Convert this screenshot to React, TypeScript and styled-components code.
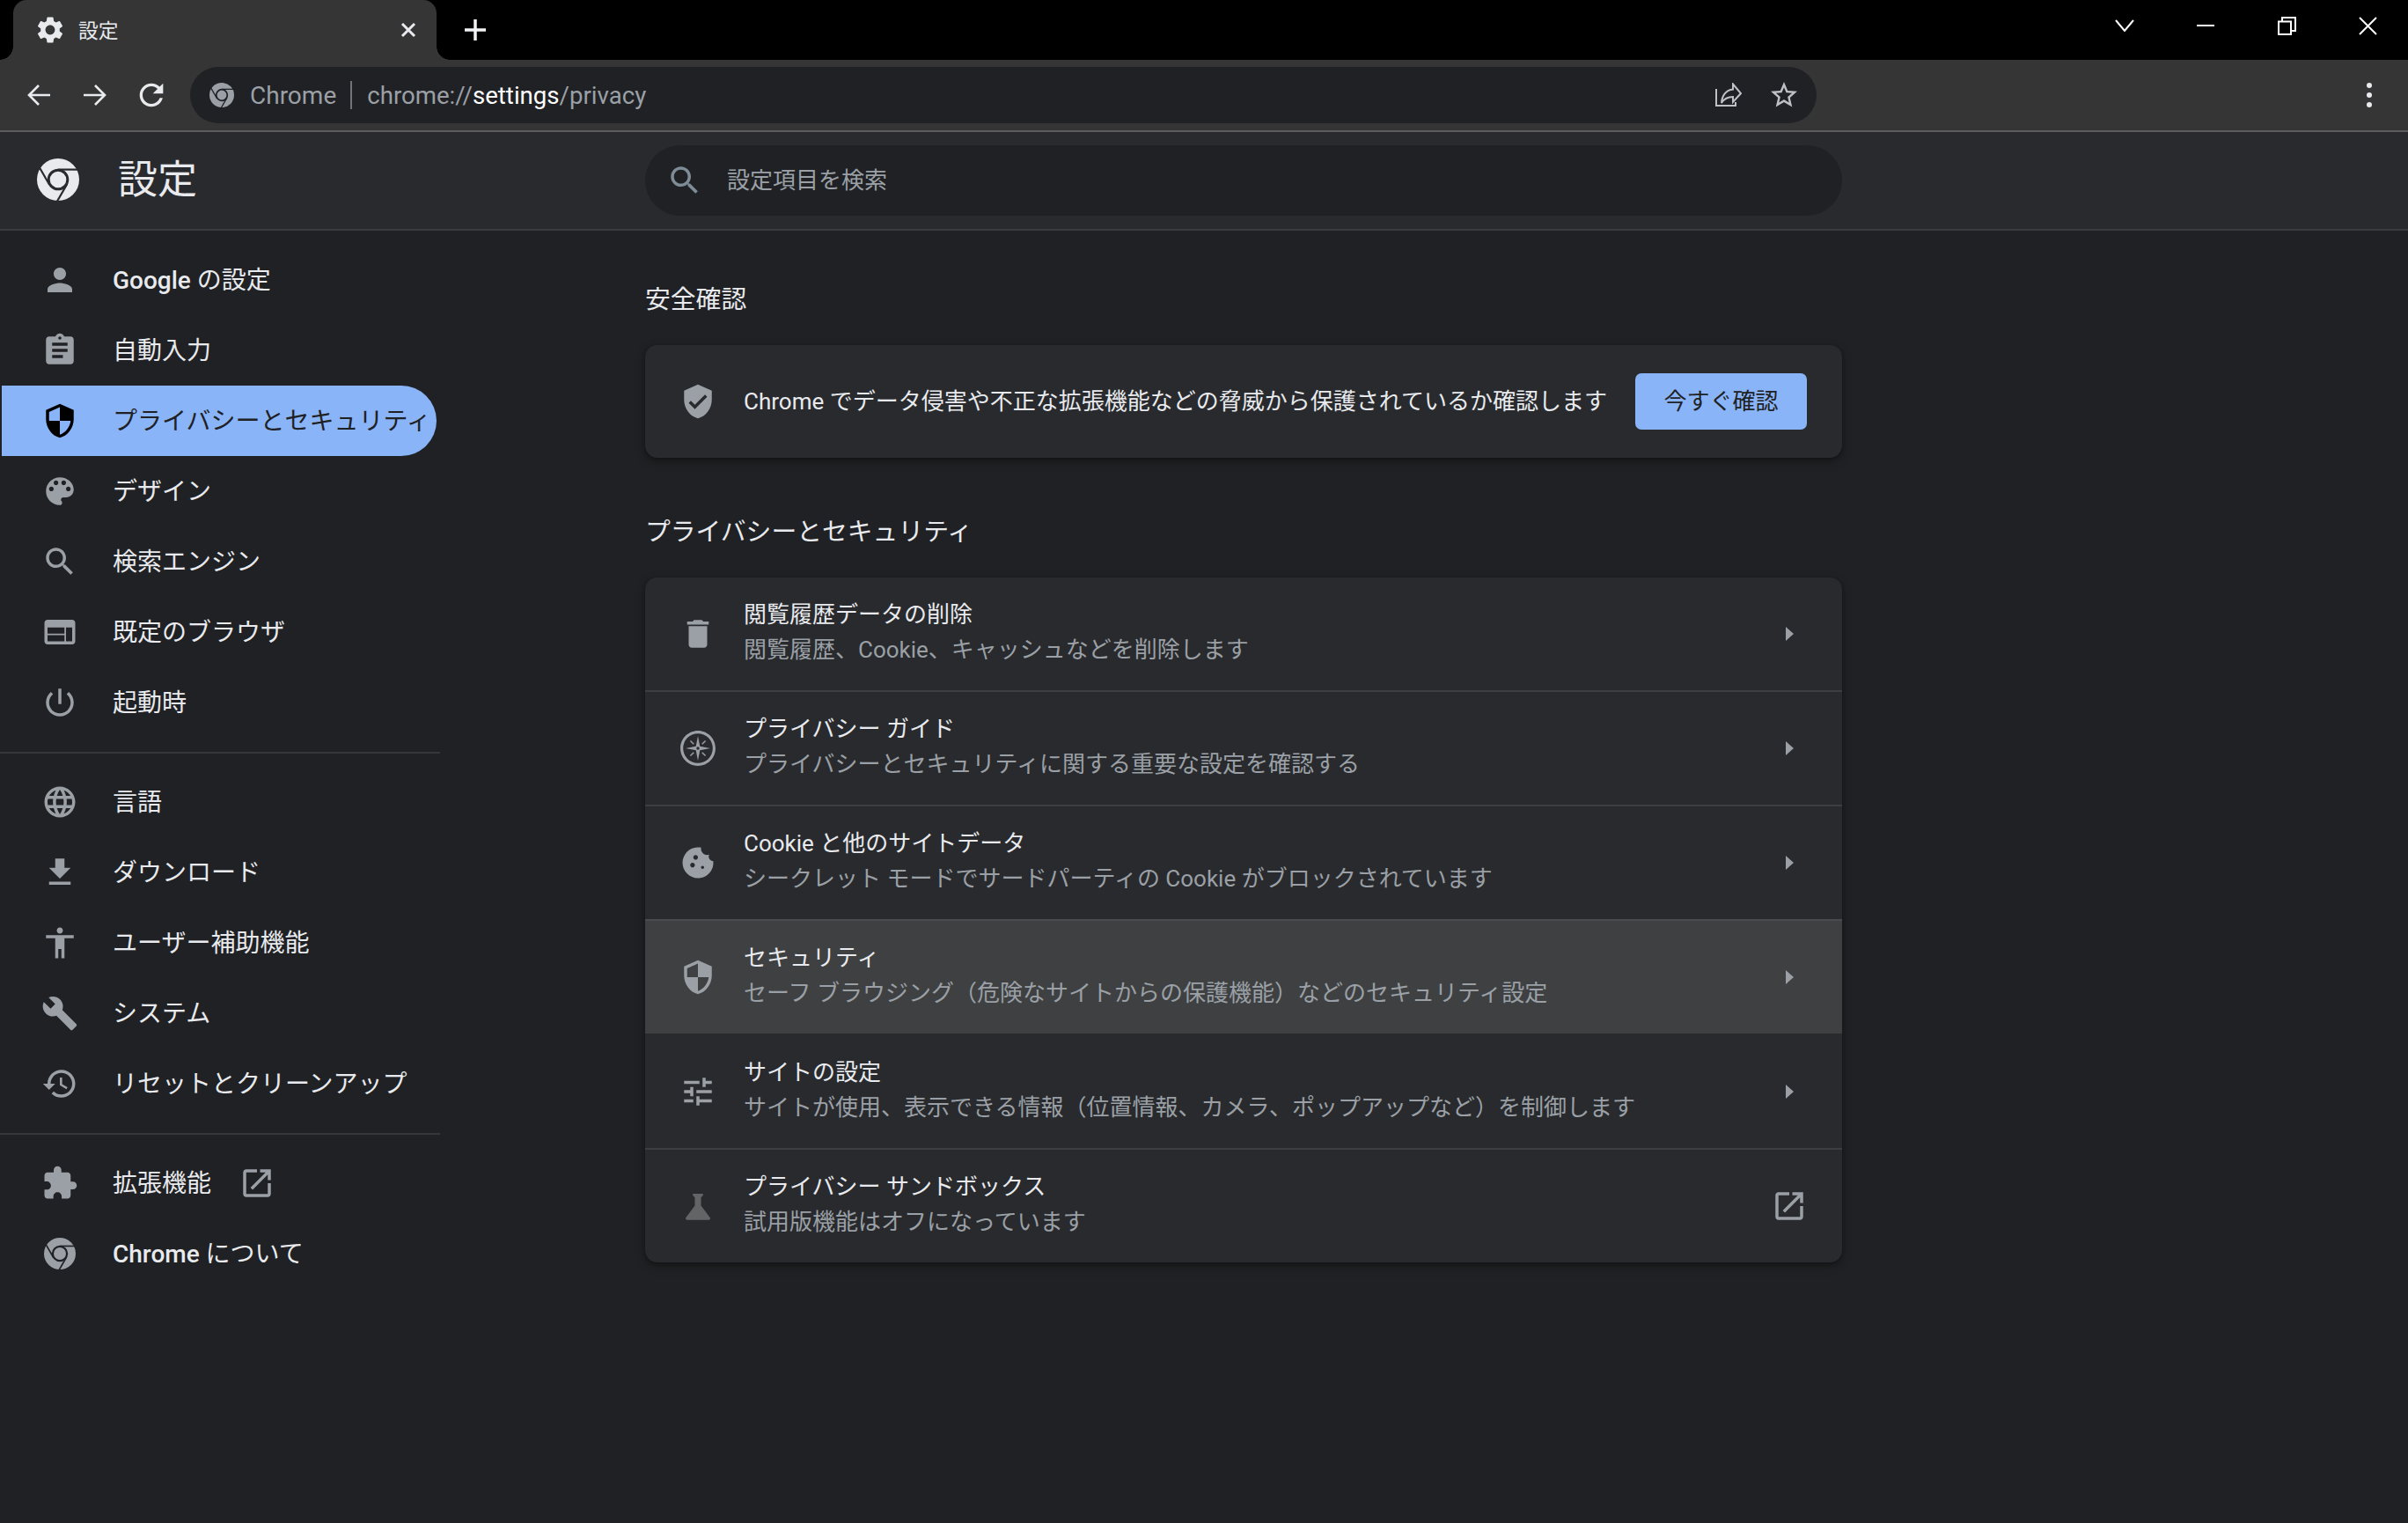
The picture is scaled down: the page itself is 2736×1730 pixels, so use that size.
import React from "react";
import styled, { createGlobalStyle } from "styled-components";

const GlobalStyle = createGlobalStyle`
  html, body { margin: 0; padding: 0; background: #202124; }
  body { font-family: Roboto, "Noto Sans CJK JP", sans-serif; color: #e8eaed; overflow: hidden; }
  * { box-sizing: border-box; }
`;

const Page = styled.div`
  width: 2736px;
  height: 1730px;
  display: flex;
  flex-direction: column;
  background: #202124;
`;

/* ---------- window frame ---------- */
const TabStrip = styled.div`
  height: 68px;
  background: #000;
  display: flex;
  align-items: stretch;
  padding-left: 15px;
`;
const Tab = styled.div`
  position: relative;
  width: 481px;
  background: #353535;
  border-radius: 15px 15px 0 0;
  display: flex;
  align-items: center;
  padding-left: 24px;
  color: #e8eaed;
  font-size: 22.75px;
  &::before, &::after {
    content: "";
    position: absolute;
    bottom: 0;
    width: 15px;
    height: 15px;
  }
  &::before { left: -15px; background: radial-gradient(circle at 0 0, transparent 14.5px, #353535 15px); }
  &::after { right: -15px; background: radial-gradient(circle at 100% 0, transparent 14.5px, #353535 15px); }
`;
const TabTitle = styled.span`
  margin-left: 14px;
  padding-bottom: 2px;
  flex: 1;
`;
const TabClose = styled.span`
  width: 18px;
  height: 18px;
  margin-right: 23px;
  display: flex;
`;
const NewTab = styled.span`
  width: 26px;
  height: 26px;
  margin: 21px 0 0 31px;
  display: flex;
`;
const WindowControls = styled.div`
  margin-left: auto;
  display: grid;
  grid-template-columns: repeat(4, 92px);
`;
const WindowButton = styled.span`
  display: flex;
  align-items: center;
  justify-content: center;
  height: 58px;
`;

const Toolbar = styled.div`
  height: 82px;
  background: #353535;
  border-bottom: 2px solid #5c5c5c;
  display: flex;
  align-items: center;
  padding: 0 12px 0 12px;
`;
const ToolButton = styled.span`
  width: 64px;
  height: 64px;
  display: flex;
  align-items: center;
  justify-content: center;
`;
const Omnibox = styled.div`
  width: 1848px;
  height: 64px;
  margin-left: 12px;
  border-radius: 32px;
  background: #202124;
  display: flex;
  align-items: center;
  padding: 0 19px 0 22px;
  font-size: 28px;
`;
const OmniOrigin = styled.span`
  margin-left: 18px;
  color: #9aa0a6;
`;
const OmniDivider = styled.span`
  width: 2px;
  height: 32px;
  margin: 0 17px 0 16px;
  background: #70747a;
`;
const OmniUrl = styled.span`
  font-size: 27.6px;
`;
const UrlDim = styled.span`
  color: #9aa0a6;
`;
const UrlBright = styled.span`
  color: #fff;
`;
const OmniActions = styled.div`
  margin-left: auto;
  display: flex;
  align-items: center;
  gap: 30px;
`;
const MenuDots = styled.div`
  margin-left: auto;
  width: 64px;
  display: flex;
  flex-direction: column;
  align-items: center;
  gap: 5px;
  span { width: 6px; height: 6px; border-radius: 50%; background: #e8eaed; }
`;

/* ---------- settings header ---------- */
const Header = styled.header`
  height: 112px;
  background: #292a2d;
  border-bottom: 2px solid #3b3c3f;
  display: grid;
  grid-template-columns: 733px 1360px;
  align-items: center;
`;
const Brand = styled.div`
  display: flex;
  align-items: center;
  padding: 0 0 2px 42px;
  gap: 44px;
`;
const BrandTitle = styled.h1`
  margin: 0;
  font-size: 45px;
  font-weight: 400;
  color: #e8eaed;
  line-height: 1;
`;
const SearchBox = styled.div`
  height: 80px;
  border-radius: 40px;
  background: #202124;
  display: flex;
  align-items: center;
  padding-left: 24px;
  gap: 27px;
  color: #9aa0a6;
  font-size: 26px;
`;
const SearchHint = styled.span`
  padding-bottom: 5px;
`;

/* ---------- body ---------- */
const Body = styled.div`
  flex: 1;
  display: flex;
`;
const Sidebar = styled.nav`
  width: 500px;
  flex: none;
  padding-top: 16px;
`;
const NavItem = styled.div<{ $active?: boolean }>`
  width: 494px;
  height: 80px;
  margin-left: 2px;
  padding-left: 45px;
  display: flex;
  align-items: center;
  gap: 39px;
  font-size: 28px;
  white-space: nowrap;
  border-radius: 0 40px 40px 0;
  color: ${(p) => (p.$active ? "#202124" : "#e8eaed")};
  background: ${(p) => (p.$active ? "#8ab4f8" : "transparent")};
`;
const NavIconBox = styled.span`
  width: 42px;
  height: 42px;
  flex: none;
  display: flex;
  align-items: center;
  justify-content: center;
`;
const NavLabel = styled.span`
  padding-bottom: 5px;
`;
const NavLinkLabel = styled.span`
  display: flex;
  align-items: center;
  gap: 31px;
`;
const Latin = styled.span`
  font-weight: 500;
`;
const NavRule = styled.hr`
  margin: 16px 0 15px;
  border: 0;
  height: 2px;
  background: #36373a;
`;

const Main = styled.main`
  margin-left: 233px;
  width: 1360px;
  padding-top: 50px;
`;
const SectionTitle = styled.h2<{ $first?: boolean }>`
  margin: ${(p) => (p.$first ? "0 0 24px" : "56px 0 24px")};
  height: 56px;
  line-height: 56px;
  font-size: 28.8px;
  font-weight: 400;
  color: #e8eaed;
  white-space: nowrap;
`;
const Card = styled.section`
  background: #292a2d;
  border-radius: 14px;
  overflow: hidden;
  box-shadow: 0 2px 4px rgba(0, 0, 0, 0.3), 0 4px 10px 3px rgba(0, 0, 0, 0.15);
`;
const SafetyRow = styled.div`
  height: 128px;
  display: flex;
  align-items: center;
  padding: 0 40px 0 39px;
  gap: 31px;
  font-size: 26px;
  color: #e8eaed;
`;
const SafetyText = styled.span`
  white-space: nowrap;
  padding-bottom: 5px;
`;
const CheckButton = styled.button`
  margin-left: auto;
  width: 195px;
  height: 64px;
  border: 0;
  border-radius: 7px;
  background: #8ab4f8;
  color: #202124;
  font: inherit;
  padding: 0 0 5px;
`;
const Row = styled.div<{ $first?: boolean; $hover?: boolean; $noRule?: boolean }>`
  height: ${(p) => (p.$first ? "128px" : "130px")};
  display: flex;
  align-items: center;
  padding: 0 39px;
  gap: 31px;
  background: ${(p) => (p.$hover ? "#3f4042" : "transparent")};
  border-top: ${(p) => (p.$first ? "none" : p.$noRule ? "2px solid transparent" : `2px solid ${p.$hover ? "#4a4b4f" : "#3d3e41"}`)};
`;
const RowText = styled.div`
  flex: 1;
  display: flex;
  flex-direction: column;
  font-size: 26px;
  line-height: 40px;
  padding-bottom: 4px;
`;
const RowLabel = styled.span`
  color: #e8eaed;
`;
const RowSub = styled.span`
  color: #9aa0a6;
`;
const RowTrail = styled.span`
  width: 42px;
  display: flex;
  justify-content: center;
`;

/* ---------- icons ---------- */
const Svg = styled.svg<{ $color?: string }>`
  flex: none;
  display: block;
  fill: ${(p) => p.$color || "#9aa0a6"};
`;
const StrokeSvg = styled.svg<{ $color?: string; $w?: number }>`
  flex: none;
  display: block;
  fill: none;
  stroke: ${(p) => p.$color || "#e8eaed"};
  stroke-width: ${(p) => p.$w || 2};
`;

const P = {
  person: "M12 12c2.21 0 4-1.79 4-4s-1.79-4-4-4-4 1.79-4 4 1.79 4 4 4zm0 2c-2.67 0-8 1.34-8 4v2h16v-2c0-2.66-5.33-4-8-4z",
  assignment: "M19 3h-4.18C14.4 1.84 13.3 1 12 1c-1.3 0-2.4.84-2.82 2H5c-1.1 0-2 .9-2 2v14c0 1.1.9 2 2 2h14c1.1 0 2-.9 2-2V5c0-1.1-.9-2-2-2zm-7 0c.55 0 1 .45 1 1s-.45 1-1 1-1-.45-1-1 .45-1 1-1zm2 14H7v-2h7v2zm3-4H7v-2h10v2zm0-4H7V7h10v2z",
  shield: "M12 1L3 5v6c0 5.55 3.84 10.74 9 12 5.16-1.26 9-6.45 9-12V5l-9-4zm0 10.99h7c-.53 4.12-3.28 7.79-7 8.94V12H5V6.3l7-3.11v8.8z",
  palette: "M12 3c-4.97 0-9 4.03-9 9s4.03 9 9 9c.83 0 1.5-.67 1.5-1.5 0-.39-.15-.74-.39-1.01-.23-.26-.38-.61-.38-.99 0-.83.67-1.5 1.5-1.5H16c2.76 0 5-2.24 5-5 0-4.42-4.03-8-9-8zm-5.5 9c-.83 0-1.5-.67-1.5-1.5S5.67 9 6.5 9 8 9.67 8 10.5 7.33 12 6.5 12zm3-4C8.67 8 8 7.33 8 6.5S8.67 5 9.5 5s1.5.67 1.5 1.5S10.33 8 9.5 8zm5 0c-.83 0-1.5-.67-1.5-1.5S13.67 5 14.5 5s1.5.67 1.5 1.5S15.33 8 14.5 8zm3 4c-.83 0-1.5-.67-1.5-1.5S16.67 9 17.5 9s1.5.67 1.5 1.5-.67 1.5-1.5 1.5z",
  search: "M15.5 14h-.79l-.28-.27C15.41 12.59 16 11.11 16 9.5 16 5.91 13.09 3 9.5 3S3 5.91 3 9.5 5.91 16 9.5 16c1.61 0 3.09-.59 4.23-1.57l.27.28v.79l5 4.99L20.49 19l-4.99-5zm-6 0C7.01 14 5 11.99 5 9.5S7.01 5 9.5 5 14 7.01 14 9.5 11.99 14 9.5 14z",
  web: "M20 4H4c-1.1 0-1.99.9-1.99 2L2 18c0 1.1.9 2 2 2h16c1.1 0 2-.9 2-2V6c0-1.1-.9-2-2-2zm-5 14H4v-4h11v4zm0-5H4V9h11v4zm5 5h-4V9h4v9z",
  power: "M13 3h-2v10h2V3zm4.83 2.17l-1.42 1.42C17.99 7.86 19 9.81 19 12c0 3.87-3.13 7-7 7s-7-3.13-7-7c0-2.19 1.01-4.14 2.58-5.42L6.17 5.17C4.23 6.82 3 9.26 3 12c0 4.97 4.03 9 9 9s9-4.03 9-9c0-2.74-1.23-5.18-3.17-6.83z",
  language: "M11.99 2C6.47 2 2 6.48 2 12s4.47 10 9.99 10C17.52 22 22 17.52 22 12S17.52 2 11.99 2zm6.93 6h-2.95c-.32-1.25-.78-2.45-1.38-3.56 1.84.63 3.37 1.91 4.33 3.56zM12 4.04c.83 1.2 1.48 2.53 1.91 3.96h-3.82c.43-1.43 1.08-2.76 1.91-3.96zM4.26 14C4.1 13.36 4 12.69 4 12s.1-1.36.26-2h3.38c-.08.66-.14 1.32-.14 2 0 .68.06 1.34.14 2H4.26zm.82 2h2.95c.32 1.25.78 2.45 1.38 3.56-1.84-.63-3.37-1.9-4.33-3.56zm2.95-8H5.08c.96-1.66 2.49-2.93 4.33-3.56C8.81 5.55 8.35 6.75 8.03 8zM12 19.96c-.83-1.2-1.48-2.53-1.91-3.96h3.82c-.43 1.43-1.08 2.76-1.91 3.96zM14.34 14H9.66c-.09-.66-.16-1.32-.16-2 0-.68.07-1.35.16-2h4.68c.09.65.16 1.32.16 2 0 .68-.07 1.34-.16 2zm.25 5.56c.6-1.11 1.06-2.31 1.38-3.56h2.95c-.96 1.65-2.49 2.93-4.33 3.56zM16.36 14c.08-.66.14-1.32.14-2 0-.68-.06-1.34-.14-2h3.38c.16.64.26 1.31.26 2s-.1 1.36-.26 2h-3.38z",
  download: "M19 9h-4V3H9v6H5l7 7 7-7zM5 18v2h14v-2H5z",
  accessibility: "M12 2c1.1 0 2 .9 2 2s-.9 2-2 2-2-.9-2-2 .9-2 2-2zm9 7h-6v13h-2v-6h-2v6H9V9H3V7h18v2z",
  build: "M22.7 19l-9.1-9.1c.9-2.3.4-5-1.5-6.9-2-2-5-2.4-7.4-1.3L9 6 6 9 1.6 4.7C.4 7.1.9 10.1 2.9 12.1c1.9 1.9 4.6 2.4 6.9 1.5l9.1 9.1c.4.4 1 .4 1.4 0l2.3-2.3c.5-.4.5-1.1.1-1.4z",
  restore: "M13 3c-4.97 0-9 4.03-9 9H1l3.89 3.89.07.14L9 12H6c0-3.87 3.13-7 7-7s7 3.13 7 7-3.13 7-7 7c-1.93 0-3.68-.79-4.94-2.06l-1.42 1.42C8.27 19.99 10.51 21 13 21c4.97 0 9-4.03 9-9s-4.03-9-9-9zm-1 5v5l4.28 2.54.72-1.21-3.5-2.08V8H12z",
  extension: "M20.5 11H19V7c0-1.1-.9-2-2-2h-4V3.5C13 2.12 11.88 1 10.5 1S8 2.12 8 3.5V5H4c-1.1 0-1.99.9-1.99 2v3.8H3.5c1.49 0 2.7 1.21 2.7 2.7s-1.21 2.7-2.7 2.7H2V20c0 1.1.9 2 2 2h3.8v-1.5c0-1.49 1.21-2.7 2.7-2.7 1.49 0 2.7 1.21 2.7 2.7V22H17c1.1 0 2-.9 2-2v-4h1.5c1.38 0 2.5-1.12 2.5-2.5S21.88 11 20.5 11z",
  open: "M19 19H5V5h7V3H5c-1.11 0-2 .9-2 2v14c0 1.1.89 2 2 2h14c1.1 0 2-.9 2-2v-7h-2v7zM14 3v2h3.59l-9.83 9.83 1.41 1.41L19 6.41V10h2V3h-7z",
  del: "M6 19c0 1.1.9 2 2 2h8c1.1 0 2-.9 2-2V7H6v12zM19 4h-3.5l-1-1h-5l-1 1H5v2h14V4z",
  verified: "M12 1L3 5v6c0 5.55 3.84 10.74 9 12 5.16-1.26 9-6.45 9-12V5l-9-4zm-2 16l-4-4 1.41-1.41L10 14.17l6.59-6.59L18 9l-8 8z",
  tune: "M3 17v2h6v-2H3zM3 5v2h10V5H3zm10 16v-2h8v-2h-8v-2h-2v6h2zM7 9v2H3v2h4v2h2V9H7zm14 4v-2H11v2h10zm-6-4h2V7h4V5h-4V3h-2v6z",
  cookie: "M21.95 10.99c-1.79-.03-3.7-1.95-2.68-4.22-2.98 1-5.77-1.59-5.19-4.56C6.95.71 2 6.58 2 12c0 5.52 4.48 10 10 10 5.89 0 10.54-5.08 9.95-11.01zM8.5 15c-.83 0-1.5-.67-1.5-1.5S7.67 12 8.5 12s1.5.67 1.5 1.5S9.33 15 8.5 15zm2-5C9.67 10 9 9.33 9 8.5S9.67 7 10.5 7s1.5.67 1.5 1.5-.67 1.5-1.5 1.5zm4.5 6c-.55 0-1-.45-1-1s.45-1 1-1 1 .45 1 1-.45 1-1 1z",
  flask: "M19.8 19.4L14 11.67V6.5l1.35-1.69c.26-.33.03-.81-.39-.81H9.04c-.42 0-.65.48-.39.81L10 6.5v5.17L4.2 19.4c-.49.66-.02 1.6.8 1.6h14c.82 0 1.29-.94.8-1.6z",
  gear: "M19.14 12.94c.04-.3.06-.61.06-.94 0-.32-.02-.64-.07-.94l2.03-1.58c.18-.14.23-.41.12-.61l-1.92-3.32c-.12-.22-.37-.29-.59-.22l-2.39.96c-.5-.38-1.03-.7-1.62-.94l-.36-2.54c-.04-.24-.24-.41-.48-.41h-3.84c-.24 0-.43.17-.47.41l-.36 2.54c-.59.24-1.13.57-1.62.94l-2.39-.96c-.22-.08-.47 0-.59.22L2.74 8.87c-.12.21-.08.47.12.61l2.03 1.58c-.05.3-.09.63-.09.94s.02.64.07.94l-2.03 1.58c-.18.14-.23.41-.12.61l1.92 3.32c.12.22.37.29.59.22l2.39-.96c.5.38 1.03.7 1.62.94l.36 2.54c.05.24.24.41.48.41h3.84c.24 0 .44-.17.47-.41l.36-2.54c.59-.24 1.13-.56 1.62-.94l2.39.96c.22.08.47 0 .59-.22l1.92-3.32c.12-.22.07-.47-.12-.61l-2.01-1.58zM12 15.6c-1.98 0-3.6-1.62-3.6-3.6s1.62-3.6 3.6-3.6 3.6 1.62 3.6 3.6-1.62 3.6-3.6 3.6z",
  reload: "M17.65 6.35C16.2 4.9 14.21 4 12 4c-4.42 0-7.99 3.58-7.99 8s3.57 8 7.99 8c3.73 0 6.84-2.55 7.73-6h-2.08c-.82 2.33-3.04 4-5.65 4-3.31 0-6-2.69-6-6s2.69-6 6-6c1.66 0 3.14.69 4.22 1.78L13 11h7V4l-2.35 2.35z",
  star: "M22 9.24l-7.19-.62L12 2 9.19 8.63 2 9.24l5.46 4.73L5.82 21 12 17.27 18.18 21l-1.63-7.03L22 9.24zM12 15.4l-3.76 2.27 1-4.28-3.32-2.88 4.38-.38L12 6.1l1.71 4.04 4.38.38-3.32 2.88 1 4.28L12 15.4z",
};

const Icon = ({ d, size = 42, color }: { d: string; size?: number; color?: string }) => (
  <Svg viewBox="0 0 24 24" width={size} height={size} $color={color}>
    <path d={d} />
  </Svg>
);

let maskCount = 0;
const ChromeMark = ({ size, color }: { size: number; color: string }) => {
  const id = React.useMemo(() => `chrome-gap-${maskCount++}`, []);
  return (
    <Svg viewBox="-12 -12 24 24" width={size} height={size} $color={color}>
      <mask id={id}>
        <rect x="-12" y="-12" width="24" height="24" fill="#fff" />
        <circle cx="0" cy="0" r="5.4" fill="none" stroke="#000" strokeWidth="1.5" />
        {[0, 120, 240].map((a) => (
          <path key={a} d="M0-5.7H13" stroke="#000" strokeWidth="1.1" transform={`rotate(${a})`} />
        ))}
      </mask>
      <circle cx="0" cy="0" r="12" mask={`url(#${id})`} />
    </Svg>
  );
};

const CompassIcon = () => (
  <Svg viewBox="0 0 24 24" width={42} height={42}>
    <path
      fillRule="evenodd"
      d="M12 .6C5.700.6.600 5.700.600 12S5.700 23.400 12 23.400 23.400 18.300 23.400 12 18.300.6 12 .6zm0 1.800a9.600 9.600 0 1 1 0 19.200 9.600 9.600 0 0 1 0-19.200z"
    />
    <path d="M12 4l1.300 6.700L20 12l-6.700 1.300L12 20l-1.300-6.700L4 12l6.700-1.300z" />
    <path d="M7.400 6.800l2.200 2.200-.6.600-2.200-2.200zM16.600 6.800l.6.600-2.200 2.200-.6-.6zM9 14.400l.6.600-2.200 2.200-.6-.6zM15 14.400l2.200 2.200-.6.600-2.200-2.200z" />
    <circle cx="12" cy="12" r="1" fill="#292a2d" />
  </Svg>
);

const Chevron = () => (
  <Svg viewBox="0 0 9 16" width={9} height={16}>
    <path d="M0 0l9 8-9 8z" />
  </Svg>
);

const navTop = [
  { d: P.person, label: <><Latin>Google</Latin> の設定</> },
  { d: P.assignment, label: "自動入力" },
  { d: P.shield, label: "プライバシーとセキュリティ", active: true },
  { d: P.palette, label: "デザイン" },
  { d: P.search, label: "検索エンジン" },
  { d: P.web, label: "既定のブラウザ" },
  { d: P.power, label: "起動時" },
];
const navMiddle = [
  { d: P.language, label: "言語" },
  { d: P.download, label: "ダウンロード" },
  { d: P.accessibility, label: "ユーザー補助機能" },
  { d: P.build, label: "システム" },
  { d: P.restore, label: "リセットとクリーンアップ" },
];

const rows = [
  { icon: <Icon d={P.del} />, label: "閲覧履歴データの削除", sub: "閲覧履歴、Cookie、キャッシュなどを削除します", first: true },
  { icon: <CompassIcon />, label: "プライバシー ガイド", sub: "プライバシーとセキュリティに関する重要な設定を確認する" },
  { icon: <Icon d={P.cookie} />, label: "Cookie と他のサイトデータ", sub: "シークレット モードでサードパーティの Cookie がブロックされています" },
  { icon: <Icon d={P.shield} />, label: "セキュリティ", sub: "セーフ ブラウジング（危険なサイトからの保護機能）などのセキュリティ設定", hover: true },
  { icon: <Icon d={P.tune} />, label: "サイトの設定", sub: "サイトが使用、表示できる情報（位置情報、カメラ、ポップアップなど）を制御します", noRule: true },
  { icon: <Icon d={P.flask} color="#636466" />, label: "プライバシー サンドボックス", sub: "試用版機能はオフになっています", external: true },
];

export default function App() {
  return (
    <Page>
      <GlobalStyle />
      <TabStrip>
        <Tab>
          <Icon d={P.gear} size={36} color="#e8eaed" />
          <TabTitle>設定</TabTitle>
          <TabClose>
            <StrokeSvg viewBox="0 0 18 18" width={18} height={18} $w={3}>
              <path d="M2 2l14 14M16 2L2 16" />
            </StrokeSvg>
          </TabClose>
        </Tab>
        <NewTab>
          <StrokeSvg viewBox="0 0 26 26" width={26} height={26} $w={3.5} $color="#f1f3f4">
            <path d="M13 1v24M1 13h24" />
          </StrokeSvg>
        </NewTab>
        <WindowControls>
          <WindowButton>
            <StrokeSvg viewBox="0 0 22 14" width={22} height={14} $w={2} $color="#fff">
              <path d="M1 1l10 12L21 1" />
            </StrokeSvg>
          </WindowButton>
          <WindowButton>
            <StrokeSvg viewBox="0 0 20 2" width={20} height={2} $w={2} $color="#fff">
              <path d="M0 1h20" />
            </StrokeSvg>
          </WindowButton>
          <WindowButton>
            <StrokeSvg viewBox="0 0 21 21" width={21} height={21} $w={2} $color="#fff">
              <path d="M1 5.500h14v14.500H1zM5 5.500V1h15v15h-5" />
            </StrokeSvg>
          </WindowButton>
          <WindowButton>
            <StrokeSvg viewBox="0 0 21 21" width={21} height={21} $w={2} $color="#fff">
              <path d="M1 1l19 19M20 1L1 20" />
            </StrokeSvg>
          </WindowButton>
        </WindowControls>
      </TabStrip>

      <Toolbar>
        <ToolButton>
          <StrokeSvg viewBox="0 0 26 24" width={26} height={24} $w={2.6}>
            <path d="M26 12H2M13 1L2 12l11 11" />
          </StrokeSvg>
        </ToolButton>
        <ToolButton>
          <StrokeSvg viewBox="0 0 26 24" width={26} height={24} $w={2.6}>
            <path d="M0 12h24M13 1l11 11-11 11" />
          </StrokeSvg>
        </ToolButton>
        <ToolButton>
          <Icon d={P.reload} size={40} color="#e8eaed" />
        </ToolButton>
        <Omnibox>
          <ChromeMark size={28} color="#9aa0a6" />
          <OmniOrigin>Chrome</OmniOrigin>
          <OmniDivider />
          <OmniUrl>
            <UrlDim>chrome://</UrlDim>
            <UrlBright>settings</UrlBright>
            <UrlDim>/privacy</UrlDim>
          </OmniUrl>
          <OmniActions>
            <StrokeSvg viewBox="0 0 30 28" width={30} height={28} $w={2} $color="#bdc1c6">
              <path d="M1 7v19h22v-4" />
              <path d="M20 1.500l9 10.500-9 10v-6c-6 0-10 2-13 7 .5-8 5-15 13-15.500z" />
            </StrokeSvg>
            <Icon d={P.star} size={36} color="#bdc1c6" />
          </OmniActions>
        </Omnibox>
        <MenuDots>
          <span />
          <span />
          <span />
        </MenuDots>
      </Toolbar>

      <Header>
        <Brand>
          <ChromeMark size={48} color="#e8eaed" />
          <BrandTitle>設定</BrandTitle>
        </Brand>
        <SearchBox>
          <Icon d={P.search} color="#7d8c96" />
          <SearchHint>設定項目を検索</SearchHint>
        </SearchBox>
      </Header>

      <Body>
        <Sidebar>
          {navTop.map((n, i) => (
            <NavItem key={i} $active={n.active}>
              <Icon d={n.d} color={n.active ? "#000" : undefined} />
              <NavLabel>{n.label}</NavLabel>
            </NavItem>
          ))}
          <NavRule />
          {navMiddle.map((n, i) => (
            <NavItem key={i}>
              <Icon d={n.d} />
              <NavLabel>{n.label}</NavLabel>
            </NavItem>
          ))}
          <NavRule />
          <NavItem>
            <Icon d={P.extension} />
            <NavLinkLabel>
              <NavLabel>拡張機能</NavLabel>
              <Icon d={P.open} />
            </NavLinkLabel>
          </NavItem>
          <NavItem>
            <NavIconBox>
              <ChromeMark size={36} color="#9aa0a6" />
            </NavIconBox>
            <NavLabel>
              <Latin>Chrome</Latin> について
            </NavLabel>
          </NavItem>
        </Sidebar>

        <Main>
          <SectionTitle $first>安全確認</SectionTitle>
          <Card>
            <SafetyRow>
              <Icon d={P.verified} />
              <SafetyText>Chrome でデータ侵害や不正な拡張機能などの脅威から保護されているか確認します</SafetyText>
              <CheckButton>今すぐ確認</CheckButton>
            </SafetyRow>
          </Card>
          <SectionTitle>プライバシーとセキュリティ</SectionTitle>
          <Card>
            {rows.map((r, i) => (
              <Row key={i} $first={r.first} $hover={r.hover} $noRule={r.noRule}>
                {r.icon}
                <RowText>
                  <RowLabel>{r.label}</RowLabel>
                  <RowSub>{r.sub}</RowSub>
                </RowText>
                <RowTrail>{r.external ? <Icon d={P.open} /> : <Chevron />}</RowTrail>
              </Row>
            ))}
          </Card>
        </Main>
      </Body>
    </Page>
  );
}
